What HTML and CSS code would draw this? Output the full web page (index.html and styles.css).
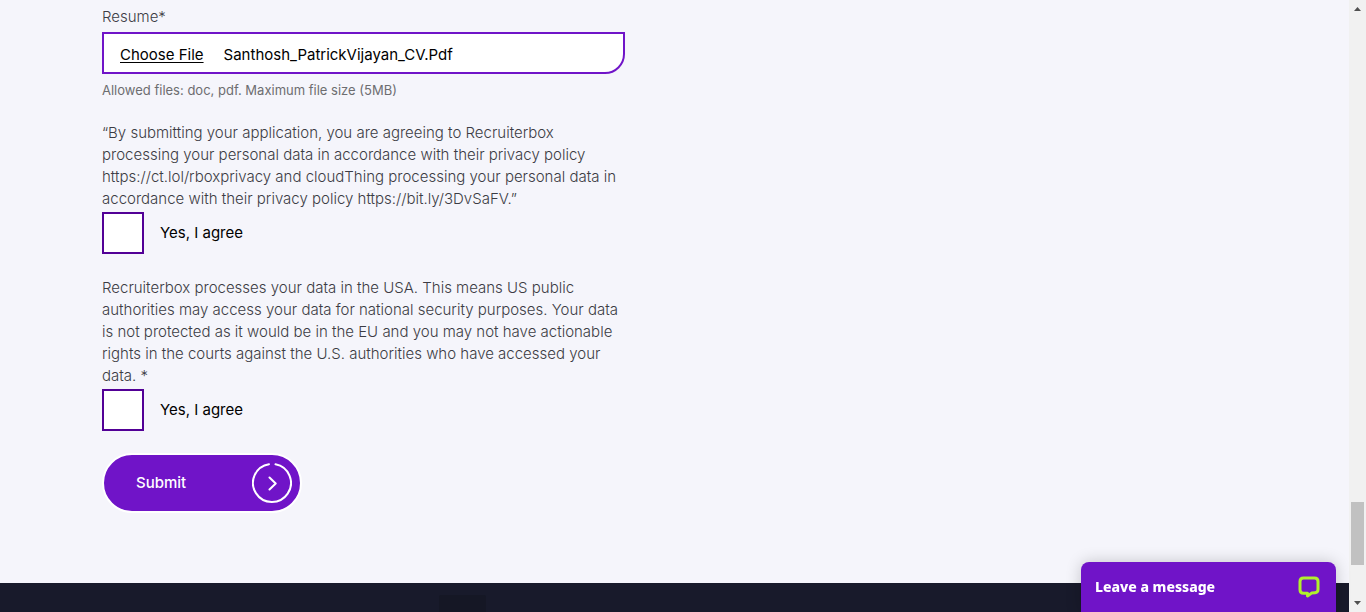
FILE: index.html
```html
<!DOCTYPE html>
<html lang="en">
<head>
<meta charset="utf-8">
<title>Job application</title>
<link rel="stylesheet" href="styles.css">
</head>
<body>
<div class="page">
  <main class="main">
    <form class="form">
      <label class="field-label" for="resume">Resume*</label>
      <div class="file-box">
        <label class="file-button" for="resume">Choose File</label>
        <span class="file-name">Santhosh_PatrickVijayan_CV.Pdf</span>
        <input class="file-input" id="resume" type="file" accept=".doc,.pdf">
      </div>
      <p class="hint">Allowed files: doc, pdf. Maximum file size (5MB)</p>

      <section class="consent">
        <p class="consent-text">“By submitting your application, you are agreeing to Recruiterbox<br>processing your personal data in accordance with their privacy policy<br>https://ct.lol/rboxprivacy and cloudThing processing your personal data in<br>accordance with their privacy policy https://bit.ly/3DvSaFV.”</p>
        <div class="check">
          <input class="check-box" id="agree-privacy" type="checkbox">
          <label for="agree-privacy">Yes, I agree</label>
        </div>
      </section>

      <section class="consent">
        <p class="consent-text">Recruiterbox processes your data in the USA. This means US public<br>authorities may access your data for national security purposes. Your data<br>is not protected as it would be in the EU and you may not have actionable<br>rights in the courts against the U.S. authorities who have accessed your<br>data. *</p>
        <div class="check">
          <input class="check-box" id="agree-usa" type="checkbox">
          <label for="agree-usa">Yes, I agree</label>
        </div>
      </section>

      <button class="submit" type="button">
        <span>Submit</span>
        <svg class="submit-icon" viewBox="0 0 40 40" aria-hidden="true">
          <path d="M23.500 1.300A19 19 0 1 1 17 1.200M17.500 14.500L23.700 20.500L17.500 26.500"/>
        </svg>
      </button>
    </form>
  </main>
  <footer class="footer"><div class="footer-tile"></div></footer>
</div>

<div class="scrollbar" aria-hidden="true">
  <svg class="arrow" viewBox="0 0 17 17"><path d="M5 11h7L8.500 7z"/></svg>
  <div class="track"><div class="thumb"></div></div>
  <svg class="arrow" viewBox="0 0 17 17"><path d="M5 6h7L8.500 10z"/></svg>
</div>

<button class="chat" type="button">
  <span>Leave a message</span>
  <svg class="chat-icon" viewBox="0 0 22 22" aria-hidden="true">
    <path d="M9.500 20V17.200H5.500Q2 17.200 2 13.700V5.500Q2 2 5.500 2H16.500Q20 2 20 5.500V13.500Q20 16.400 17 16.700L13.600 17.100Z"/>
  </svg>
</button>
</body>
</html>
```
FILE: styles.css
```css
* {
  box-sizing: border-box;
}

body {
  margin: 0;
  display: grid;
  grid-template-columns: 1fr 17px;
  height: 100vh;
  overflow: hidden;
  background: #f5f5fb;
  font-family: Inter, "Liberation Sans", sans-serif;
  font-size: 15px;
  line-height: 22px;
  color: #000;
}

p {
  margin: 0;
}

button {
  border: 0;
  font: inherit;
  cursor: pointer;
}

.page {
  display: flex;
  flex-direction: column;
  min-width: 0;
}

.main {
  padding: 6px 102px 70px;
}

.form {
  display: flex;
  flex-direction: column;
  align-items: flex-start;
  max-width: 523px;
}

.field-label {
  font-weight: 300;
  color: #3c3c44;
}

.file-box {
  display: flex;
  align-items: center;
  gap: 20px;
  width: 100%;
  height: 42px;
  margin-top: 4px;
  padding: 4px 16px 0;
  border: 2px solid #7014c8;
  border-radius: 0 0 20px;
  background: #fff;
}

.file-box:focus-within {
  outline: 2px solid #c9a4ee;
}

.file-button {
  text-decoration: underline;
  text-underline-offset: 2px;
  cursor: pointer;
}

.file-input {
  width: 1px;
  height: 1px;
  opacity: 0;
}

.hint {
  margin-top: 5px;
  font-size: 13px;
  color: #6d6d70;
}

.consent {
  margin-top: 21px;
}

.consent + .consent {
  margin-top: 23px;
}

.consent-text {
  font-weight: 300;
  color: #3c3c44;
  white-space: nowrap;
}

.check {
  display: flex;
  align-items: center;
  gap: 16px;
  margin-top: 2px;
}

.check-box {
  appearance: none;
  width: 42px;
  height: 42px;
  margin: 0;
  border: 2px solid #520096;
  background: #fff;
}

.check-box:checked {
  background: #520096;
  box-shadow: inset 0 0 0 8px #fff;
}

.submit {
  display: flex;
  align-items: center;
  justify-content: space-between;
  width: 200px;
  height: 60px;
  margin-top: 22px;
  padding: 0 8px 0 32px;
  border: 2px solid #fff;
  border-radius: 30px;
  background: #7014c8;
  color: #fff;
  font-weight: 500;
}

.submit-icon {
  width: 40px;
  height: 40px;
  fill: none;
  stroke: #fff;
  stroke-width: 2;
  stroke-linecap: round;
  stroke-linejoin: round;
}

.footer {
  flex: 1;
  padding: 12px 439px 0;
  background: #181a2b;
}

.footer-tile {
  width: 47px;
  height: 100%;
  border-radius: 2px 2px 0 0;
  background: #151725;
}

.scrollbar {
  display: flex;
  flex-direction: column;
  background: #f1f1f1;
}

.arrow {
  width: 17px;
  height: 17px;
  fill: #505050;
}

.track {
  display: flex;
  flex: 1;
  flex-direction: column;
  justify-content: flex-end;
  padding: 0 2px 30px;
}

.thumb {
  height: 63px;
  background: #c1c1c1;
}

.chat {
  position: fixed;
  right: 30px;
  bottom: 0;
  display: flex;
  align-items: center;
  justify-content: space-between;
  width: 255px;
  height: 50px;
  padding: 0 16px 0 14px;
  border-radius: 8px 8px 0 0;
  background: #7014c8;
  box-shadow: 0 0 16px rgba(0, 0, 0, 0.2);
  color: #fff;
  font-family: "Noto Sans", sans-serif;
  font-size: 14px;
  font-weight: 800;
}

.chat-icon {
  width: 22px;
  height: 22px;
  fill: none;
  stroke: #b0f02c;
  stroke-width: 3;
  stroke-linejoin: round;
}
```
